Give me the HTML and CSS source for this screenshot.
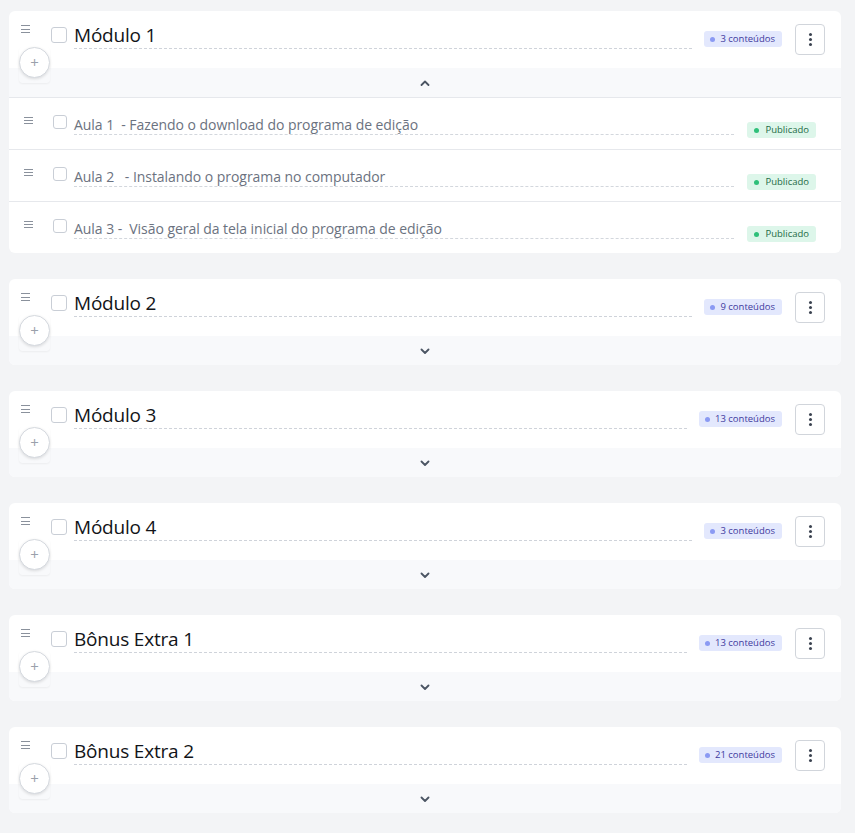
FILE: index.html
```html
<!DOCTYPE html>
<html lang="pt-BR">
<head>
<meta charset="utf-8">
<title>Módulos</title>
<link rel="stylesheet" href="styles.css">
</head>
<body>
<main class="list">

  <section class="card">
    <div class="mod-head">
      <span class="handle"><i></i><i></i><i></i></span>
      <span class="check"></span>
      <div class="title-field">Módulo 1</div>
      <span class="count"><b></b>3 conteúdos</span>
      <button class="kebab"><i></i><i></i><i></i></button>
    </div>
    <div class="add-wrap"><span class="add">+</span></div>
    <div class="mod-foot">
      <svg class="chev" width="10" height="6" viewBox="0 0 10 6"><polyline points="1.5,5 5,1.5 8.5,5" fill="none" stroke="#4b5563" stroke-width="1.8" stroke-linecap="round" stroke-linejoin="round"/></svg>
    </div>
    <div class="lesson">
      <span class="handle small"><i></i><i></i><i></i></span>
      <span class="check small"></span>
      <div class="lesson-field">Aula 1&nbsp; - Fazendo o download do programa de edição</div>
      <span class="pub"><b></b>Publicado</span>
    </div>
    <div class="lesson">
      <span class="handle small"><i></i><i></i><i></i></span>
      <span class="check small"></span>
      <div class="lesson-field">Aula 2 &nbsp; - Instalando o programa no computador</div>
      <span class="pub"><b></b>Publicado</span>
    </div>
    <div class="lesson">
      <span class="handle small"><i></i><i></i><i></i></span>
      <span class="check small"></span>
      <div class="lesson-field">Aula 3 -&nbsp; Visão geral da tela inicial do programa de edição</div>
      <span class="pub"><b></b>Publicado</span>
    </div>
  </section>

  <section class="card">
    <div class="mod-head">
      <span class="handle"><i></i><i></i><i></i></span>
      <span class="check"></span>
      <div class="title-field">Módulo 2</div>
      <span class="count"><b></b>9 conteúdos</span>
      <button class="kebab"><i></i><i></i><i></i></button>
    </div>
    <div class="add-wrap"><span class="add">+</span></div>
    <div class="mod-foot">
      <svg class="chev" width="10" height="6" viewBox="0 0 10 6"><polyline points="1.5,1.5 5,5 8.5,1.5" fill="none" stroke="#4b5563" stroke-width="1.8" stroke-linecap="round" stroke-linejoin="round"/></svg>
    </div>
  </section>

  <section class="card">
    <div class="mod-head">
      <span class="handle"><i></i><i></i><i></i></span>
      <span class="check"></span>
      <div class="title-field">Módulo 3</div>
      <span class="count"><b></b>13 conteúdos</span>
      <button class="kebab"><i></i><i></i><i></i></button>
    </div>
    <div class="add-wrap"><span class="add">+</span></div>
    <div class="mod-foot">
      <svg class="chev" width="10" height="6" viewBox="0 0 10 6"><polyline points="1.5,1.5 5,5 8.5,1.5" fill="none" stroke="#4b5563" stroke-width="1.8" stroke-linecap="round" stroke-linejoin="round"/></svg>
    </div>
  </section>

  <section class="card">
    <div class="mod-head">
      <span class="handle"><i></i><i></i><i></i></span>
      <span class="check"></span>
      <div class="title-field">Módulo 4</div>
      <span class="count"><b></b>3 conteúdos</span>
      <button class="kebab"><i></i><i></i><i></i></button>
    </div>
    <div class="add-wrap"><span class="add">+</span></div>
    <div class="mod-foot">
      <svg class="chev" width="10" height="6" viewBox="0 0 10 6"><polyline points="1.5,1.5 5,5 8.5,1.5" fill="none" stroke="#4b5563" stroke-width="1.8" stroke-linecap="round" stroke-linejoin="round"/></svg>
    </div>
  </section>

  <section class="card">
    <div class="mod-head">
      <span class="handle"><i></i><i></i><i></i></span>
      <span class="check"></span>
      <div class="title-field">Bônus Extra 1</div>
      <span class="count"><b></b>13 conteúdos</span>
      <button class="kebab"><i></i><i></i><i></i></button>
    </div>
    <div class="add-wrap"><span class="add">+</span></div>
    <div class="mod-foot">
      <svg class="chev" width="10" height="6" viewBox="0 0 10 6"><polyline points="1.5,1.5 5,5 8.5,1.5" fill="none" stroke="#4b5563" stroke-width="1.8" stroke-linecap="round" stroke-linejoin="round"/></svg>
    </div>
  </section>

  <section class="card">
    <div class="mod-head">
      <span class="handle"><i></i><i></i><i></i></span>
      <span class="check"></span>
      <div class="title-field">Bônus Extra 2</div>
      <span class="count"><b></b>21 conteúdos</span>
      <button class="kebab"><i></i><i></i><i></i></button>
    </div>
    <div class="add-wrap"><span class="add">+</span></div>
    <div class="mod-foot">
      <svg class="chev" width="10" height="6" viewBox="0 0 10 6"><polyline points="1.5,1.5 5,5 8.5,1.5" fill="none" stroke="#4b5563" stroke-width="1.8" stroke-linecap="round" stroke-linejoin="round"/></svg>
    </div>
  </section>

</main>
</body>
</html>
```
FILE: styles.css
```css
* { box-sizing: border-box; }

html, body {
  margin: 0;
  padding: 0;
  background: #f3f4f6;
  font-family: "Open Sans", "Noto Sans", sans-serif;
}

.list {
  display: flex;
  flex-direction: column;
  gap: 26px;
  padding: 11px 14px 20px 9px;
}

.card {
  position: relative;
  background: #fff;
  border-radius: 6px;
  overflow: hidden;
}

.mod-head {
  display: flex;
  align-items: flex-start;
  height: 57px;
  padding: 13px 16px 0 12px;
}

.handle {
  display: flex;
  flex-direction: column;
  justify-content: space-between;
  width: 9px;
  height: 8px;
  margin-top: 1px;
  flex: none;
}
.handle i {
  display: block;
  height: 1px;
  background: #8a919c;
}

.check {
  flex: none;
  width: 16px;
  height: 16px;
  margin: 3px 0 0 21px;
  border: 1px solid #c9ced6;
  border-radius: 3px;
  background: #fff;
}

.title-field {
  flex: 1;
  margin: -1px 0 0 7px;
  height: 26px;
  font-size: 19px;
  font-weight: 500;
  letter-spacing: -0.2px;
  line-height: 25px;
  color: #121418;
  border-bottom: 1px dashed #cfd3da;
  white-space: nowrap;
}

.count {
  flex: none;
  display: flex;
  align-items: center;
  gap: 5px;
  height: 16px;
  margin: 7px 0 0 12px;
  padding: 0 7px 0 6px;
  border-radius: 3px;
  background: #e3e8fd;
  color: #3e3a9e;
  font-size: 9.5px;
  line-height: 16px;
}
.count b {
  width: 5px;
  height: 5px;
  border-radius: 50%;
  background: #8b9af3;
}

.kebab {
  flex: none;
  display: flex;
  flex-direction: column;
  align-items: center;
  justify-content: center;
  gap: 2px;
  width: 30px;
  height: 31px;
  margin-left: 13px;
  padding: 0;
  border: 1px solid #d1d5db;
  border-radius: 4px;
  background: #fff;
}
.kebab i {
  display: block;
  width: 3px;
  height: 3px;
  border-radius: 50%;
  background: #3b4250;
}

.add-wrap {
  position: absolute;
  left: 10px;
  top: 36px;
  width: 31px;
  height: 36px;
  border-radius: 4px;
  box-shadow: 0 1px 2px rgba(0, 0, 0, 0.05);
}
.add {
  display: flex;
  align-items: center;
  justify-content: center;
  width: 31px;
  height: 31px;
  border: 1px solid #d5d9df;
  border-radius: 50%;
  background: #fff;
  box-shadow: 0 1px 3px rgba(0, 0, 0, 0.12);
  color: #9aa1ab;
  font-size: 15px;
  line-height: 1;
}

.mod-foot {
  display: flex;
  align-items: center;
  justify-content: center;
  height: 29px;
  background: #f8f9fb;
}
.chev { display: block; }

.lesson {
  display: flex;
  align-items: flex-start;
  height: 52px;
  padding: 17px 25px 0 15px;
  border-top: 1px solid #e6e8ec;
}
.handle.small {
  margin-top: 2px;
  height: 7px;
}
.check.small {
  width: 14px;
  height: 14px;
  margin: 0 0 0 20px;
  border-radius: 3px;
}
.lesson-field {
  flex: 1;
  margin-left: 7px;
  height: 20px;
  font-size: 14px;
  letter-spacing: -0.05px;
  line-height: 19px;
  color: #6b7280;
  border-bottom: 1px dashed #d3d7dd;
  white-space: nowrap;
}

.pub {
  flex: none;
  display: flex;
  align-items: center;
  gap: 6px;
  height: 16px;
  margin: 7px 0 0 13px;
  padding: 0 7px 0 7px;
  border-radius: 3px;
  background: #ddf6ea;
  color: #1d6b45;
  font-size: 9.5px;
  line-height: 16px;
}
.pub b {
  width: 5px;
  height: 5px;
  border-radius: 50%;
  background: #2fc07a;
}
```
